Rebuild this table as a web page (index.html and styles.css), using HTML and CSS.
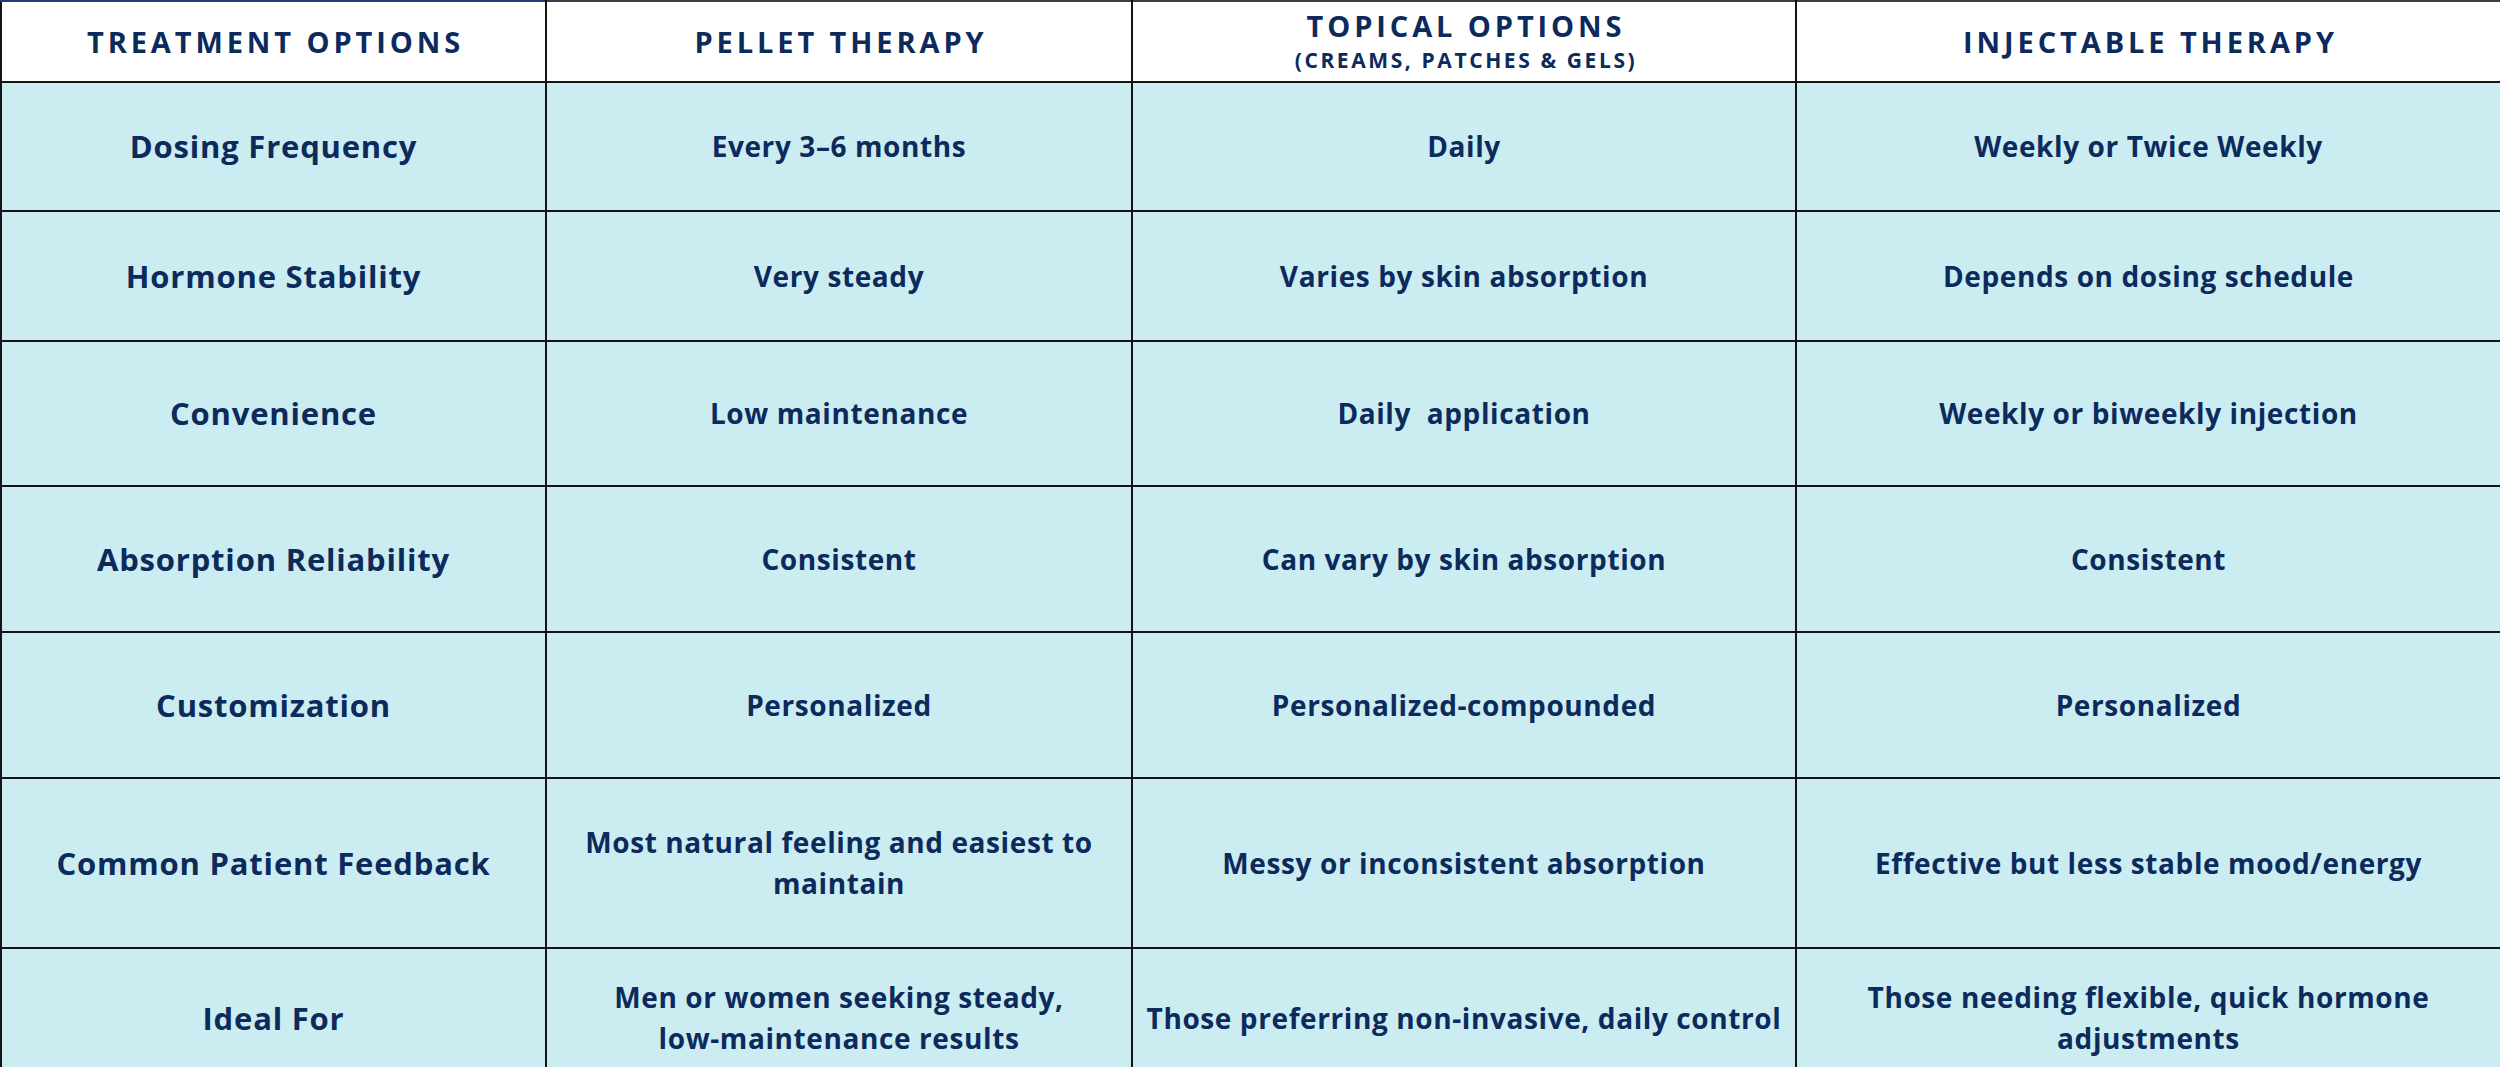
FILE: index.html
```html
<!DOCTYPE html>
<html lang="en">
<head>
<meta charset="utf-8">
<title>Treatment Options Comparison</title>
<link rel="stylesheet" href="styles.css">
</head>
<body>
<table class="compare">
  <colgroup>
    <col class="c1"><col class="c2"><col class="c3"><col class="c4">
  </colgroup>
  <thead>
    <tr class="head">
      <th class="first">TREATMENT OPTIONS</th>
      <th>PELLET THERAPY</th>
      <th>TOPICAL OPTIONS<span class="sub">(CREAMS, PATCHES &amp; GELS)</span></th>
      <th>INJECTABLE THERAPY</th>
    </tr>
  </thead>
  <tbody>
    <tr class="r1">
      <td class="label">Dosing Frequency</td>
      <td>Every 3–6 months</td>
      <td>Daily</td>
      <td>Weekly or Twice Weekly</td>
    </tr>
    <tr class="r2">
      <td class="label">Hormone Stability</td>
      <td>Very steady</td>
      <td>Varies by skin absorption</td>
      <td>Depends on dosing schedule</td>
    </tr>
    <tr class="r3">
      <td class="label">Convenience</td>
      <td>Low maintenance</td>
      <td>Daily&nbsp; application</td>
      <td>Weekly or biweekly injection</td>
    </tr>
    <tr class="r4">
      <td class="label">Absorption Reliability</td>
      <td>Consistent</td>
      <td>Can vary by skin absorption</td>
      <td>Consistent</td>
    </tr>
    <tr class="r5">
      <td class="label">Customization</td>
      <td>Personalized</td>
      <td>Personalized-compounded</td>
      <td>Personalized</td>
    </tr>
    <tr class="r6">
      <td class="label">Common Patient Feedback</td>
      <td>Most natural feeling and easiest to<br>maintain</td>
      <td>Messy or inconsistent absorption</td>
      <td>Effective but less stable mood/energy</td>
    </tr>
    <tr class="r7">
      <td class="label">Ideal For</td>
      <td>Men or women seeking steady,<br>low-maintenance results</td>
      <td>Those preferring non-invasive, daily control</td>
      <td>Those needing flexible, quick hormone<br>adjustments</td>
    </tr>
  </tbody>
</table>
</body>
</html>
```
FILE: styles.css
```css
html, body {
  margin: 0;
  padding: 0;
  background: #ffffff;
}

.compare {
  width: 2500px;
  table-layout: fixed;
  border-collapse: collapse;
  font-family: "Open Sans", Lato, "Liberation Sans", sans-serif;
  color: #0c2a5b;
}

.c1 { width: 545px; }
.c2 { width: 586px; }
.c3 { width: 664px; }
.c4 { width: 705px; }

.compare th,
.compare td {
  border: 2px solid #141414;
  text-align: center;
  vertical-align: middle;
  padding: 0 4px;
  white-space: nowrap;
}

.compare th {
  background: #ffffff;
  font-size: 29px;
  font-weight: 700;
  letter-spacing: 3.9px;
  line-height: 36px;
  padding-left: 8px;
  border-top-color: #3a3f47;
}

.compare th.first {
  border-top-color: #1f3f7a;
}

.compare th .sub {
  display: block;
  font-size: 21px;
  letter-spacing: 2.6px;
  line-height: 32px;
}

.compare td {
  background: #cbedf1;
  font-size: 28px;
  font-weight: 700;
  line-height: 41px;
  letter-spacing: 0.6px;
}

.compare td.label {
  font-size: 31px;
  letter-spacing: 0.8px;
}

.head { height: 81px; }
.r1 { height: 129px; }
.r2 { height: 130px; }
.r3 { height: 145px; }
.r4 { height: 146px; }
.r5 { height: 146px; }
.r6 { height: 170px; }
.r7 { height: 140px; }
```
